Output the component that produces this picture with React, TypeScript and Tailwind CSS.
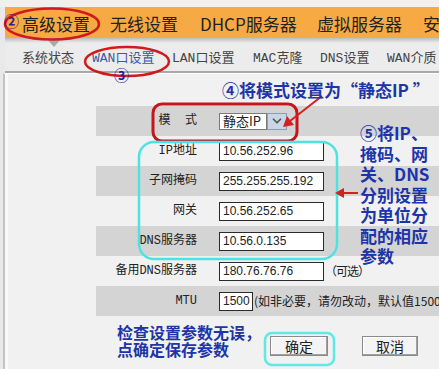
import { ChevronDown } from "lucide-react";

const cjk = "'Noto Sans CJK SC', sans-serif";
const monoCjk = "'Liberation Mono', 'Noto Sans CJK SC', monospace";

const tabs = [
  { label: "高级设置", w: "w-[88px]" },
  { label: "无线设置", w: "w-[90px]" },
  { label: "DHCP服务器", w: "w-[117px]" },
  { label: "虚拟服务器", w: "w-[106px]" },
  { label: "安全设置", w: "w-[80px]" },
];

const subTabs = [
  { label: "系统状态", w: "w-[70px]", active: false },
  { label: "WAN口设置", w: "w-[80px]", active: true },
  { label: "LAN口设置", w: "w-[81px]", active: false },
  { label: "MAC克隆", w: "w-[67px]", active: false },
  { label: "DNS设置", w: "w-[67px]", active: false },
  { label: "WAN介质", w: "w-[70px]", active: false },
];

function Input({ value, w = "w-[105px]" }: { value: string; w?: string }) {
  return (
    <div
      className={`${w} h-[19px] bg-white border border-[#2a2a2a] flex items-center pl-[3px] text-[12px] text-[#222] shrink-0`}
      style={{ fontFamily: "'Liberation Sans', sans-serif" }}
    >
      {value}
    </div>
  );
}

function Row({
  label,
  gray,
  children,
}: {
  label: string;
  gray?: boolean;
  children: React.ReactNode;
}) {
  return (
    <div className={`flex items-center h-[30px] ml-[88px] ${gray ? "bg-[#d4d4d4]" : ""}`}>
      <div
        className="w-[101px] text-right text-[12px] text-[#222] whitespace-pre shrink-0"
        style={{ fontFamily: monoCjk }}
      >
        {label}
      </div>
      <div className="flex items-center pl-[22px] whitespace-nowrap">{children}</div>
    </div>
  );
}

export default function App() {
  return (
    <div
      className="relative w-[439px] h-[369px] overflow-hidden bg-[#e9e9e9] flex flex-col"
      style={{ fontFamily: cjk }}
    >
      {/* top strip */}
      <div className="h-[7px] bg-[#f0f0f0] shrink-0" />

      {/* main tabs */}
      <div className="ml-[5px] h-[31px] bg-[#f7a944] flex items-center pl-[17px] pt-[3px] shrink-0">
        {tabs.map((t) => (
          <div key={t.label} className={`${t.w} shrink-0 text-[17px] text-[#222] whitespace-nowrap`}>
            {t.label}
          </div>
        ))}
      </div>

      {/* sub tabs */}
      <div className="ml-[5px] h-[35px] bg-[linear-gradient(#bdbdbd,#ececec_5px)] border-b-2 border-[#a9a9a9] flex items-center pl-[17px] pt-[9px] shrink-0">
        {subTabs.map((t) => (
          <div
            key={t.label}
            className={`${t.w} shrink-0 text-[13px] whitespace-nowrap ${t.active ? "text-[#3c5a9e]" : "text-[#444]"}`}
            style={{ fontFamily: monoCjk }}
          >
            {t.label}
          </div>
        ))}
      </div>

      {/* content */}
      <div className="flex-1 ml-[3px] border-l-2 border-[#c4c4c4] border-t border-t-white">
        <div className="h-full border-l-[3px] border-[#fafafa] bg-[#f1f1f1] pt-[32px]">
          <Row label="模  式" gray>
            <div className="flex items-center h-[18px]">
              <div className="w-[48px] h-[17px] bg-white border border-[#7a7a7a] flex items-center pl-[3px] text-[13px] text-[#222]">
                静态IP
              </div>
              <div className="w-[20px] h-[17px] bg-[#c9d6e5] border border-[#8c9db3] flex items-center justify-center">
                <ChevronDown size={14} strokeWidth={3} className="text-[#555]" />
              </div>
            </div>
          </Row>
          <Row label="IP地址">
            <Input value="10.56.252.96" />
          </Row>
          <Row label="子网掩码" gray>
            <Input value="255.255.255.192" />
          </Row>
          <Row label="网关">
            <Input value="10.56.252.65" />
          </Row>
          <Row label="DNS服务器" gray>
            <Input value="10.56.0.135" />
          </Row>
          <Row label="备用DNS服务器">
            <Input value="180.76.76.76" />
            <span className="ml-[1px] text-[12px] tracking-[-1px] text-[#222]">（可选）</span>
          </Row>
          <Row label="MTU" gray>
            <Input value="1500" w="w-[34px]" />
            <span className="ml-[1px] text-[12px] text-[#222]">(如非必要，请勿改动，默认值1500)</span>
          </Row>

          {/* buttons */}
          <div className="flex mt-[20px] ml-[262px] gap-[34px]">
            <button className="w-[58px] h-[20px] bg-[#f4f4f4] border border-[#8a8a8a] shadow-[inset_-1px_-1px_0_#a0a0a0,inset_1px_1px_0_#ffffff] text-[14px] leading-none text-[#222]">
              确定
            </button>
            <button className="w-[56px] h-[20px] bg-[#f4f4f4] border border-[#8a8a8a] shadow-[inset_-1px_-1px_0_#a0a0a0,inset_1px_1px_0_#ffffff] text-[14px] leading-none text-[#222]">
              取消
            </button>
          </div>
        </div>
      </div>

      {/* annotations */}
      <svg className="absolute inset-0 pointer-events-none" width="439" height="369">
        <polygon points="46,38 62,38 54,47" fill="#a8a8a8" />
        <ellipse cx="52" cy="24" rx="47" ry="15.5" fill="none" stroke="#cf1b1b" strokeWidth="2.5" />
        <ellipse cx="127" cy="61.5" rx="42" ry="14.5" fill="none" stroke="#cf1b1b" strokeWidth="2.5" />
        <rect x="153" y="104" width="144" height="37" rx="9" fill="none" stroke="#c4161c" strokeWidth="3" />
        <rect x="139" y="142" width="198" height="117" rx="15" fill="none" stroke="#4ee3e3" strokeWidth="2.5" />
        <rect x="265" y="333" width="69" height="32" rx="7" fill="none" stroke="#5fe8e8" strokeWidth="2.5" />
        <line x1="322" y1="96" x2="290" y2="121" stroke="#d42020" strokeWidth="2" />
        <polygon points="283,127 287,116 294,125" fill="#d42020" />
        <line x1="358" y1="193" x2="343" y2="193" stroke="#d42020" strokeWidth="2" />
        <polygon points="335,193 344,188 344,198" fill="#d42020" />
      </svg>

      <div className="absolute left-[4px] top-[12px] text-[15px] font-bold text-[#3a1a8a] leading-[18px]">②</div>
      <div className="absolute left-[114px] top-[66px] text-[15px] font-bold text-[#1a1aa0] leading-[18px]">③</div>

      <div className="absolute left-[222px] top-[80px] text-[17px] font-bold text-[#1d35a8] leading-[20px] whitespace-nowrap">
        ④将模式设置为“静态IP ”
      </div>
      <div className="absolute left-[360px] top-[123px] text-[17px] font-bold text-[#1d35a8] leading-[20.5px] whitespace-nowrap">
        ⑤将IP、
        <br />
        掩码、网
        <br />
        关、DNS
        <br />
        分别设置
        <br />
        为单位分
        <br />
        配的相应
        <br />
        参数
      </div>
      <div className="absolute left-[117px] top-[324px] text-[16px] font-bold text-[#1d35a8] leading-[17px] whitespace-nowrap">
        检查设置参数无误，
        <br />
        点确定保存参数
      </div>
    </div>
  );
}
